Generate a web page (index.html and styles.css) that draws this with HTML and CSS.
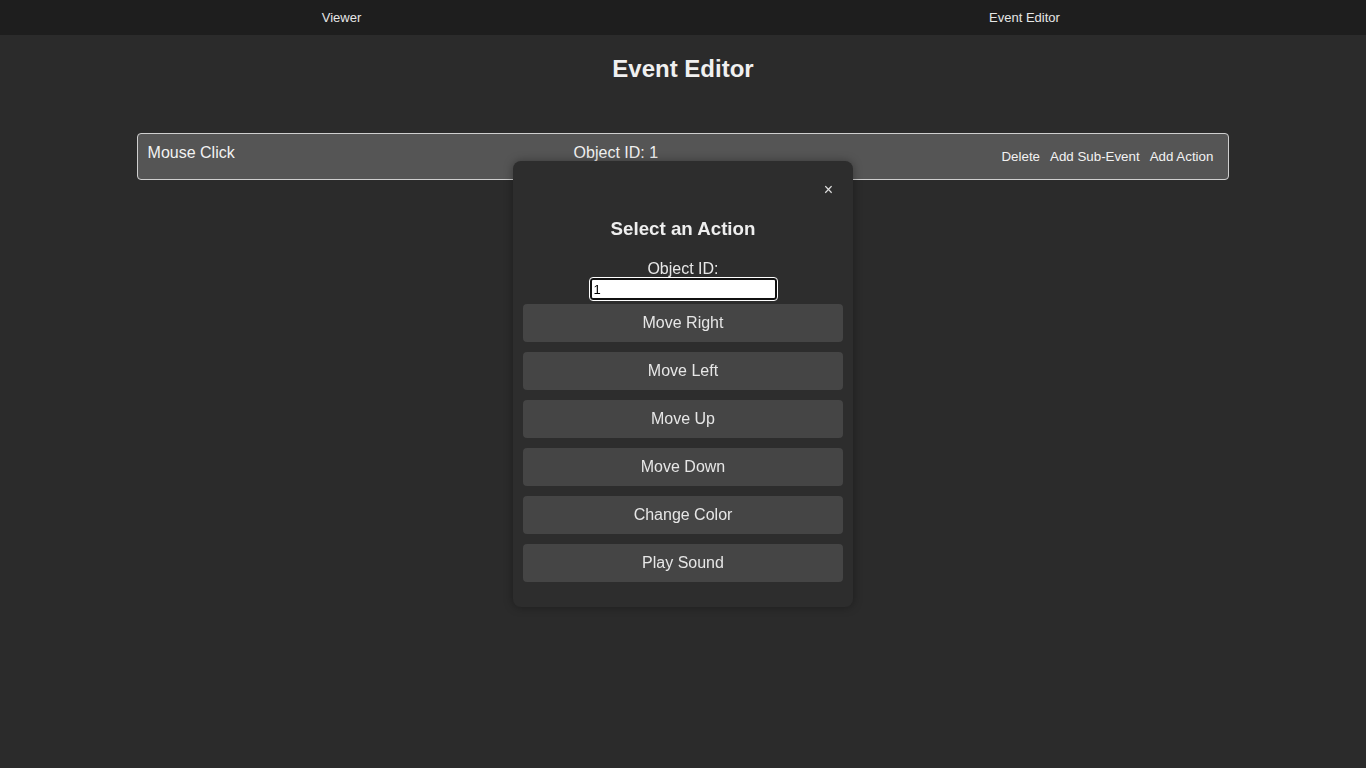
FILE: index.html
```html
<!DOCTYPE html>
<html>
<head>
<meta charset="utf-8">
<link rel="stylesheet" href="styles.css">
</head>
<body>
<nav class="tabs">
  <div class="tab">Viewer</div>
  <div class="tab">Event Editor</div>
</nav>
<main class="editor">
  <h1 class="title">Event Editor</h1>
  <div class="event-row">
    <span class="event-name">Mouse Click</span>
    <span class="event-obj">Object ID: 1</span>
    <div class="event-actions">
      <span class="link">Delete</span>
      <span class="link">Add Sub-Event</span>
      <span class="link">Add Action</span>
    </div>
  </div>
</main>
<div class="modal">
  <div class="close-row"><span class="close">×</span></div>
  <h3 class="modal-title">Select an Action</h3>
  <label class="obj-label">Object ID:</label>
  <div class="input-wrap"><input class="obj-input" type="text" value="1"></div>
  <button class="action">Move Right</button>
  <button class="action">Move Left</button>
  <button class="action">Move Up</button>
  <button class="action">Move Down</button>
  <button class="action">Change Color</button>
  <button class="action">Play Sound</button>
</div>
</body>
</html>
```
FILE: styles.css
```css
* { box-sizing: border-box; }
html, body { margin: 0; padding: 0; }
body {
  background: #2b2b2b;
  color: #eeeeee;
  font-family: "Liberation Sans", Arial, sans-serif;
  height: 768px;
}
.tabs {
  display: flex;
  height: 35px;
  background: #1e1e1e;
}
.tab {
  flex: 1;
  text-align: center;
  font-size: 13px;
  line-height: 35px;
  color: #e6e6e6;
}
.title {
  text-align: center;
  font-size: 24px;
  font-weight: bold;
  margin: 20px 0 0;
  line-height: 28px;
  color: #f0f0f0;
}
.event-row {
  width: 80%;
  margin: 50px auto 0;
  height: 47px;
  background: #555555;
  border: 1px solid #cfcfcf;
  border-radius: 4px;
  display: flex;
  align-items: flex-start;
  padding: 10px 15px 0 10px;
  font-size: 16px;
  color: #f2f2f2;
}
.event-name { width: 426px; }
.event-obj { flex: 1; }
.event-actions {
  display: flex;
  gap: 10px;
  font-size: 13.33px;
  padding-top: 5px;
}
.modal {
  position: fixed;
  left: 513px;
  top: 161px;
  width: 340px;
  height: 446px;
  background: #2d2d2d;
  border-radius: 8px;
  box-shadow: 0 0 10px rgba(0,0,0,0.35);
  padding: 20px 10px;
  text-align: center;
  font-family: "Liberation Sans", Arial, sans-serif;
}
.close-row {
  display: flex;
  justify-content: flex-end;
  padding-right: 10px;
  height: 20px;
}
.close {
  font-size: 16px;
  line-height: 16px;
  color: #e0e0e0;
  margin-top: 1px;
}
.modal-title {
  margin: 17px 0 0;
  font-size: 18.72px;
  line-height: 22px;
  font-weight: bold;
  color: #eeeeee;
}
.obj-label {
  display: block;
  margin-top: 20px;
  font-size: 16px;
  line-height: 18px;
  color: #e8e8e8;
}
.input-wrap { height: 22px; margin-bottom: 4px; display: flex; justify-content: center; }
.obj-input {
  width: 187px;
  height: 22px;
  border: 2px solid #111;
  outline: 1px solid #fff;
  border-radius: 3px;
  background: #fff;
  font-family: "Liberation Sans", Arial, sans-serif;
  font-size: 13px;
  padding: 0 2px;
  color: #000;
}
.action {
  display: block;
  width: 320px;
  height: 38px;
  margin: 0 0 10px;
  background: #454545;
  border: none;
  border-radius: 4px;
  color: #e6e6e6;
  font-family: "Liberation Sans", Arial, sans-serif;
  font-size: 16px;
}
```
